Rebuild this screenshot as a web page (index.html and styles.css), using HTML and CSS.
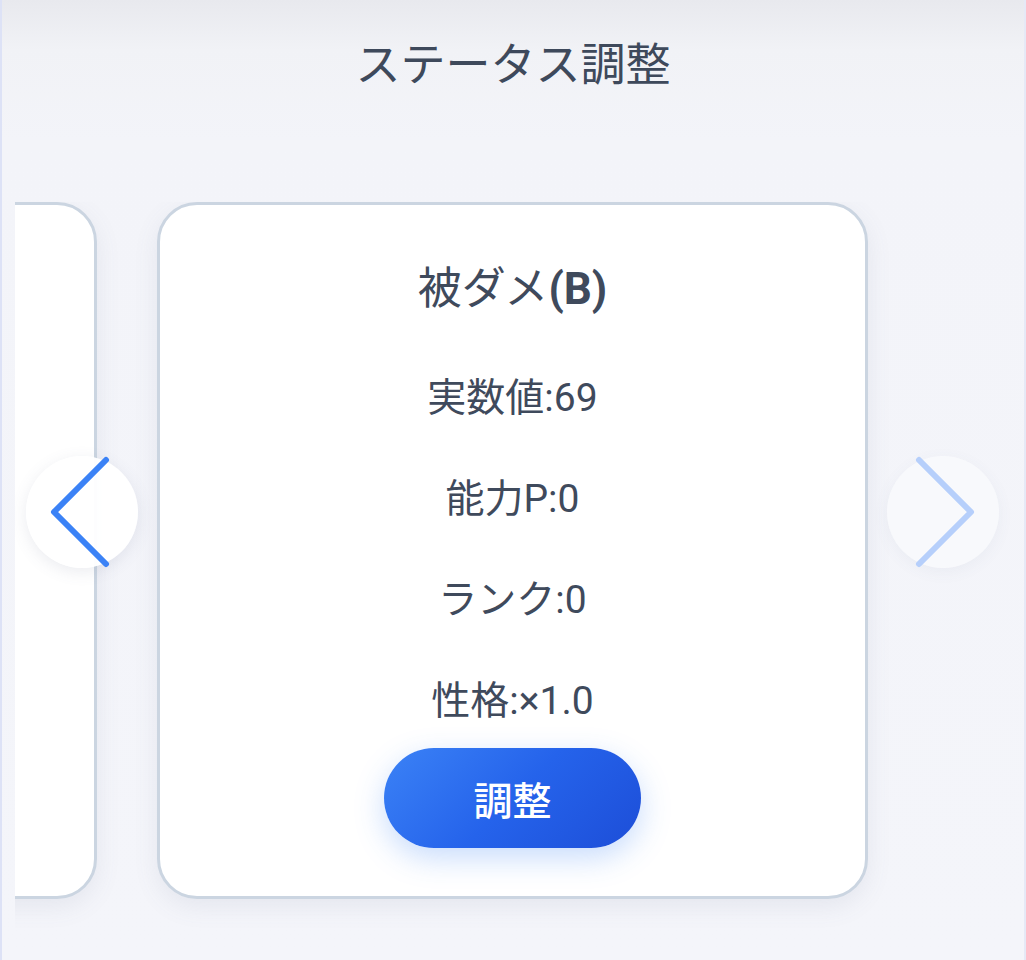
FILE: index.html
```html
<!DOCTYPE html>
<html lang="ja">
<head>
<meta charset="utf-8">
<link rel="stylesheet" href="styles.css">
</head>
<body>
<div class="page">
  <h1 class="title">ステータス調整</h1>
  <div class="carousel">
    <div class="track">
      <div class="card card-prev"></div>
      <div class="card card-main">
        <div class="card-title"><span class="jp">被ダメ</span>(B)</div>
        <div class="stat">実数値:69</div>
        <div class="stat">能力P:0</div>
        <div class="stat">ランク:0</div>
        <div class="stat">性格:×1.0</div>
        <button class="adjust">調整</button>
      </div>
    </div>
    <button class="nav nav-prev" aria-label="前へ">
      <svg viewBox="0 0 60 112" width="60" height="112"><path d="M56 4 L4 56 L56 108" fill="none" stroke="#3b82f6" stroke-width="6" stroke-linecap="round" stroke-linejoin="round"/></svg>
    </button>
    <button class="nav nav-next" aria-label="次へ">
      <svg viewBox="0 0 60 112" width="60" height="112"><path d="M4 4 L56 56 L4 108" fill="none" stroke="#b6cffb" stroke-width="6" stroke-linecap="round" stroke-linejoin="round"/></svg>
    </button>
  </div>
</div>
</body>
</html>
```

FILE: styles.css
```css
html, body {
  margin: 0;
  padding: 0;
}
body {
  width: 1026px;
  height: 960px;
  overflow: hidden;
  background: linear-gradient(180deg, #e8e9ee 0px, #f1f2f6 50px, #f3f4f9 140px, #f4f5fa 100%);
  font-family: Roboto, "Noto Sans CJK JP", sans-serif;
  color: #3f4a5c;
}
.page {
  height: 960px;
  box-sizing: border-box;
  border-left: 2px solid #dde2f6;
  border-right: 2px solid #e6e9f6;
  display: flex;
  flex-direction: column;
}
.title {
  margin: 0;
  height: 130px;
  line-height: 124px;
  padding-bottom: 6px;
  box-sizing: border-box;
  text-align: center;
  font-size: 45px;
  font-weight: 400;
  color: #3e495b;
  font-family: "Noto Sans CJK JP", sans-serif;
}
.carousel {
  position: relative;
  margin-left: 13px;
  margin-top: 72px;
  height: 760px;
  overflow: hidden;
}
.track {
  display: flex;
  gap: 60px;
  margin-left: -629px;
}
.card {
  flex: 0 0 711px;
  height: 697px;
  box-sizing: border-box;
  background: #ffffff;
  border: 3px solid #cbd5e1;
  border-radius: 40px;
  box-shadow: 0 8px 24px rgba(100, 110, 140, 0.10);
}
.card-main {
  display: flex;
  flex-direction: column;
  align-items: center;
  padding-top: 46px;
}
.card-title {
  font-size: 44px;
  font-weight: 700;
  line-height: 76px;
  margin-bottom: 46px;
}
.card-title .jp {
  font-weight: 400;
}
.stat {
  font-size: 39px;
  line-height: 50px;
  margin-bottom: 51px;
}
.stat:last-of-type {
  margin-bottom: 22px;
}
.adjust {
  width: 257px;
  height: 100px;
  border: none;
  border-radius: 50px;
  background: linear-gradient(135deg, #3b82f6 0%, #2563eb 50%, #1d4ed8 100%);
  color: #ffffff;
  font-family: "Noto Sans CJK JP", sans-serif;
  font-size: 39px;
  font-weight: 500;
  box-shadow: 0 10px 30px rgba(59, 130, 246, 0.28);
  cursor: pointer;
}
.nav {
  position: absolute;
  top: 254px;
  width: 112px;
  height: 112px;
  border-radius: 50%;
  border: none;
  padding: 0;
  display: flex;
  align-items: center;
  justify-content: center;
  cursor: pointer;
}
.nav-prev {
  left: 11px;
  background: rgba(255, 255, 255, 0.95);
  box-shadow: 0 4px 16px rgba(90, 100, 130, 0.12);
}
.nav-prev svg { margin-left: -4px; }
.nav-next {
  left: 872px;
  background: rgba(248, 249, 252, 0.9);
  box-shadow: 0 4px 16px rgba(90, 100, 130, 0.06);
}
.nav-next svg { margin-left: 4px; }
```
